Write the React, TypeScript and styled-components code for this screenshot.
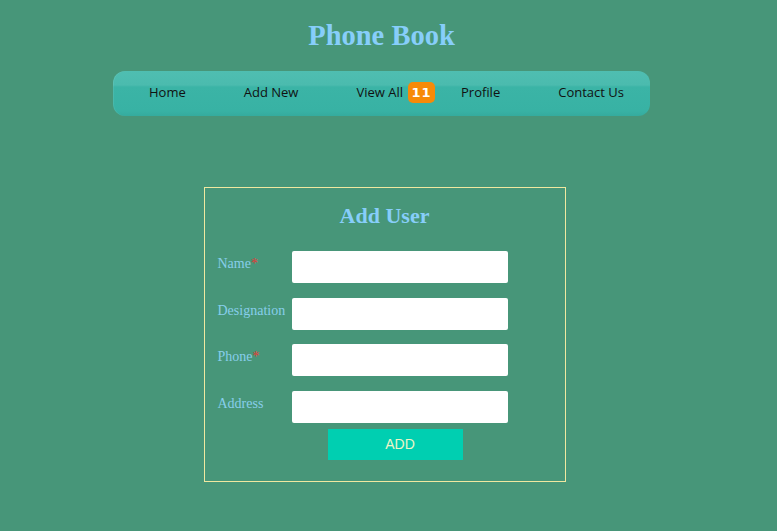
import React from 'react';
import styled, { createGlobalStyle } from 'styled-components';

const GlobalStyle = createGlobalStyle`
  html, body {
    margin: 0;
    padding: 0;
    background: #479679;
  }
  * { box-sizing: border-box; }
`;

const navItems = ['Home', 'Add New', 'View All', 'Profile', 'Contact Us'];

const fields = [
  { label: 'Name', required: true },
  { label: 'Designation', required: false },
  { label: 'Phone', required: true },
  { label: 'Address', required: false },
];

const App = () => (
  <>
    <GlobalStyle />
    <Page>
      <Title>Phone Book</Title>
      <Nav>
        {navItems.map((item) => (
          <NavItem key={item}>
            {item}
            {item === 'View All' && <Badge>11</Badge>}
          </NavItem>
        ))}
      </Nav>
      <FormWrap>
        <Form onSubmit={(e) => e.preventDefault()}>
          <FormTitle>Add User</FormTitle>
          {fields.map((field) => (
            <Row key={field.label}>
              <Label>
                {field.label}
                {field.required && <Star>*</Star>}
              </Label>
              <Input type="text" />
            </Row>
          ))}
          <AddButton type="submit">ADD</AddButton>
        </Form>
      </FormWrap>
    </Page>
  </>
);

export default App;

const Page = styled.div`
  width: 763px;
  display: flex;
  flex-direction: column;
  align-items: center;
  padding-top: 19px;
  min-height: 531px;
`;

const Title = styled.h1`
  margin: 0;
  font-family: 'Liberation Serif', serif;
  font-weight: bold;
  font-size: 28.5px;
  line-height: 34px;
  color: #87cefa;
`;

const Nav = styled.ul`
  list-style: none;
  margin: 18px 0 0;
  width: 537px;
  height: 45px;
  padding: 0 0 2px 36px;
  display: flex;
  align-items: center;
  gap: 58px;
  border-radius: 12px;
  background: linear-gradient(
    to bottom,
    #4fbeb1 0px,
    #4bbbae 14px,
    #3bb4a6 16px,
    #38b2a4 40px,
    #35ab9e 45px
  );
  box-shadow: inset 1px 0 0 rgba(255, 255, 255, 0.08);
`;

const NavItem = styled.li`
  position: relative;
  font-family: 'Open Sans', sans-serif;
  font-size: 13px;
  line-height: 21px;
  color: #111;
  cursor: pointer;
`;

const Badge = styled.span`
  position: absolute;
  left: calc(100% + 5px);
  top: 0;
  width: 27px;
  height: 21px;
  border-radius: 5px;
  background: #f78a08;
  color: #fff;
  font-family: 'DejaVu Sans', sans-serif;
  font-weight: bold;
  font-size: 13px;
  line-height: 21px;
  text-align: center;
  letter-spacing: 1px;
`;

const FormWrap = styled.div`
  width: 100%;
  display: flex;
  justify-content: center;
  padding-left: 6px;
  margin-top: 71px;
`;

const Form = styled.form`
  width: 362px;
  height: 295px;
  border: 1px solid #f0e8a0;
  padding: 14px 0 0 13px;
  display: flex;
  flex-direction: column;
`;

const FormTitle = styled.h2`
  margin: 0 0 21px;
  padding-right: 13px;
  text-align: center;
  font-family: 'Liberation Serif', serif;
  font-weight: bold;
  font-size: 22px;
  line-height: 28px;
  color: #87cefa;
`;

const Row = styled.div`
  display: flex;
  align-items: flex-start;
  margin-bottom: 14.5px;

  &:nth-of-type(4) {
    margin-bottom: 6px;
  }
`;

const Label = styled.label`
  width: 74px;
  padding-top: 5px;
  font-family: 'Liberation Serif', serif;
  font-size: 14px;
  line-height: 16px;
  color: #87ceeb;
  white-space: nowrap;
`;

const Star = styled.span`
  color: #e53935;
`;

const Input = styled.input`
  width: 216px;
  height: 32px;
  border: none;
  border-radius: 2px;
  background: #fff;
  outline: none;
`;

const AddButton = styled.button`
  margin-left: 110px;
  width: 135px;
  height: 31px;
  border: none;
  padding: 0 0 0 10px;
  background: #00cfb1;
  color: #eef5c8;
  font-family: 'Liberation Sans', Arial, sans-serif;
  font-size: 14px;
  cursor: pointer;
`;
